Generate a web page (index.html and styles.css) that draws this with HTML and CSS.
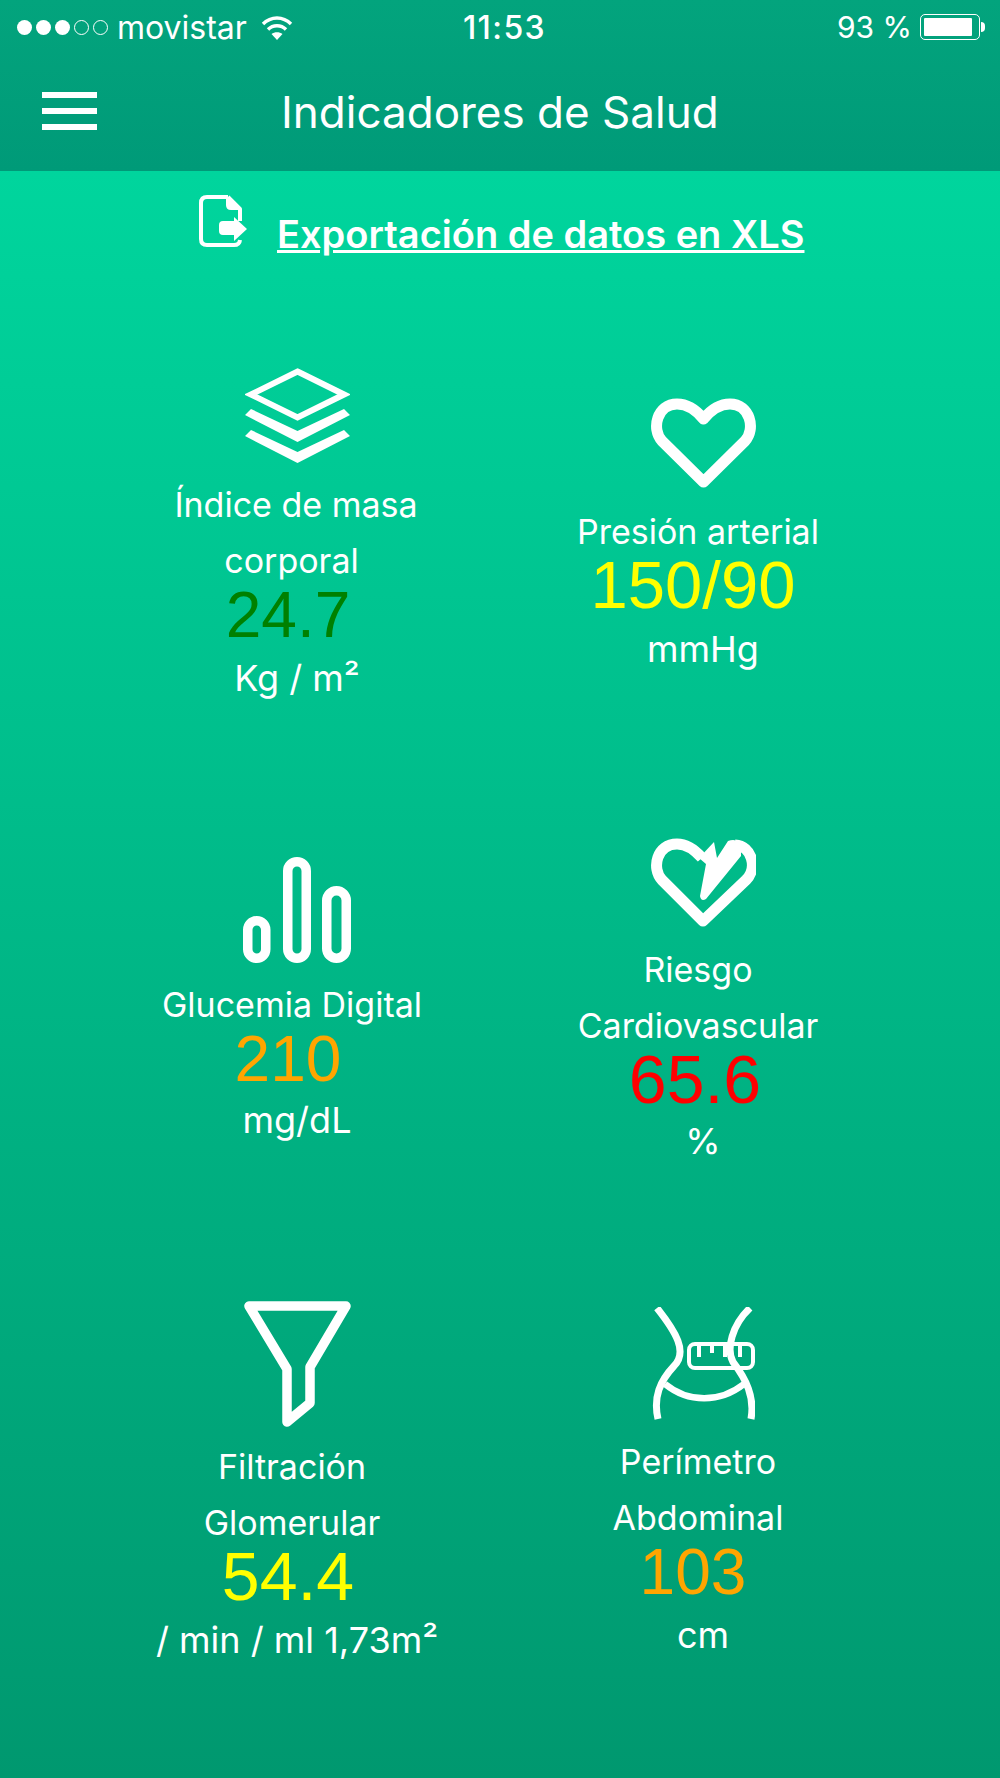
FILE: index.html
```html
<!DOCTYPE html>
<html lang="es">

<head>
    <meta charset="utf-8">
    <title>Indicadores de Salud</title>
    <link rel="stylesheet" href="styles.css">
</head>

<body>
    <header class="topbar">
        <div class="status">
            <div class="status-left">
                <span class="dot"></span><span class="dot"></span><span class="dot"></span><span class="dot empty"></span><span class="dot empty"></span>
                <span class="carrier">movistar</span>
                <svg class="wifi" viewBox="0 0 32 25" width="32" height="25">
                    <path d="M2 9C10 1 22 1 30 9" fill="none" stroke="#fff" stroke-width="3.4"/>
                    <path d="M7 14.500C12 9.500 20 9.500 25 14.500" fill="none" stroke="#fff" stroke-width="3.4"/>
                    <path d="M16 25L10.500 19C13.500 16.500 18.500 16.500 21.500 19Z" fill="#fff"/>
                </svg>
            </div>
            <div class="clock">11:53</div>
            <div class="status-right">
                <span class="percent">93 %</span>
                <span class="battery"><span class="battery-level"></span></span>
                <span class="battery-tip"></span>
            </div>
        </div>
        <div class="navbar">
            <div class="burger"><span></span><span></span><span></span></div>
            <h1 class="title">Indicadores de Salud</h1>
        </div>
    </header>

    <main class="content">
        <a class="export" href="#">
            <svg class="export-icon" viewBox="0 0 49 54" width="49" height="54">
                <path d="M30 3H9Q3 3 3 9V45Q3 51 9 51H36Q41.500 51 42 46M42 27V15L30 3" fill="none" stroke="#fff" stroke-width="4" stroke-linejoin="round"/>
                <path d="M28 3L43 16H33Q28 16 28 11Z" fill="#fff"/>
                <path d="M25 27H36V23L49 35L36 47V41H25Q21 41 21 37V31Q21 27 25 27Z" fill="#fff"/>
            </svg>
            <span class="export-text">Exportación de datos en XLS</span>
        </a>

        <div class="grid">
            <section class="card left">
                <svg class="icon" viewBox="0 0 105 95" width="105" height="95">
                    <path d="M52.500 3.500L99 26.500L52.500 49.500L6 26.500Z" fill="none" stroke="#fff" stroke-width="6"/>
                    <path d="M0 47L6 41L52.500 63L99 41L105 47L52.500 74Z" fill="#fff"/>
                    <path d="M0 68L6 62L52.500 84L99 62L105 68L52.500 95Z" fill="#fff"/>
                </svg>
                <div class="label label-imc">Índice de masa<br><span class="line-shift">corporal</span></div>
                <div class="value green">24.7</div>
                <div class="unit">Kg / m²</div>
            </section>

            <section class="card right first-right">
                <svg class="icon icon-heart" viewBox="0 0 105 90" width="105" height="90">
                    <path d="M52.500 84L11 43C0 31 6 6 26 6C38 6 46 13 52.500 21C59 13 67 6 79 6C99 6 105 31 94 43Z" fill="none" stroke="#fff" stroke-width="11" stroke-linejoin="round"/>
                </svg>
                <div class="label">Presión arterial</div>
                <div class="value big pressure yellow">150/90</div>
                <div class="unit">mmHg</div>
            </section>

            <section class="card left second-left">
                <svg class="icon" viewBox="0 0 108 106" width="108" height="106">
                    <g fill="none" stroke="#fff" stroke-width="9.500">
                        <rect x="4.750" y="63.750" width="18" height="37.500" rx="9"/>
                        <rect x="44.750" y="4.750" width="18.500" height="96.500" rx="9.250"/>
                        <rect x="83.750" y="33.750" width="19.500" height="67.500" rx="9.750"/>
                    </g>
                </svg>
                <div class="label">Glucemia Digital</div>
                <div class="value orange">210</div>
                <div class="unit unit-up">mg/dL</div>
            </section>

            <section class="card right">
                <svg class="icon" viewBox="0 0 105 90" width="105" height="90">
                    <path d="M51 20C44 12 36 6 26 6C6 6 0 30 11 42L52 83L95 42C107 30 101 8 84 7" fill="none" stroke="#fff" stroke-width="11" stroke-linejoin="round"/>
                    <path d="M48 20L63 4L66 20L77 3Q84 0 90 5L90 18L55 61Q50 64 49 58L55 26Z" fill="#fff"/>
                </svg>
                <div class="label">Riesgo<br>Cardiovascular</div>
                <div class="value big risk red">65.6</div>
                <div class="unit unit-up">%</div>
            </section>

            <section class="card left">
                <svg class="icon icon-funnel" viewBox="0 0 107 127" width="107" height="127">
                    <path d="M5 6H102L66 67V103L43 122V69Z" fill="none" stroke="#fff" stroke-width="9.500" stroke-linejoin="round"/>
                </svg>
                <div class="label">Filtración<br>Glomerular</div>
                <div class="value big yellow">54.4</div>
                <div class="unit">/ min / ml 1,73m²</div>
            </section>

            <section class="card right third-right">
                <svg class="icon" viewBox="0 0 103 113" width="103" height="113">
                    <g fill="none" stroke="#fff">
                        <path d="M5 1C24 25 36 45 22 59C8 74 1 90 6 112" stroke-width="7"/>
                        <path d="M98 1C80 18 74 42 81 55C94 72 103 90 99 112" stroke-width="7"/>
                        <path d="M13 77C36 96 68 96 92 77" stroke-width="6.500"/>
                        <rect x="37" y="37" width="64" height="24" rx="6" stroke-width="4"/>
                        <path d="M47 37V50M60 37V46M73 37V50M88 37V50" stroke-width="4"/>
                    </g>
                </svg>
                <div class="label">Perímetro<br>Abdominal</div>
                <div class="value orange">103</div>
                <div class="unit">cm</div>
            </section>
        </div>
    </main>
</body>

</html>
```

FILE: styles.css
```css
* {
    box-sizing: border-box;
}

body {
    margin: 0;
    height: 1778px;
    overflow: hidden;
    display: flex;
    flex-direction: column;
    color: #fff;
    font-family: Inter, "Liberation Sans", sans-serif;
}

/* top bar */
.topbar {
    height: 171px;
    background: linear-gradient(#03a47d, #009a78);
}

.status {
    height: 54px;
    padding: 0 15px 0 17px;
    display: grid;
    grid-template-columns: 1fr auto 1fr;
    align-items: center;
}

.status-left {
    display: flex;
    align-items: center;
    gap: 4px;
}

.dot {
    width: 15px;
    height: 15px;
    border-radius: 50%;
    background: #fff;
}

.dot.empty {
    background: transparent;
    border: 1.5px solid #fff;
}

.carrier {
    margin-left: 5px;
    font-size: 32px;
}

.wifi {
    margin-left: 10px;
}

.clock {
    margin-left: 7px;
    font-size: 32px;
    font-weight: 500;
    letter-spacing: 1.4px;
}

.status-right {
    display: flex;
    align-items: center;
    justify-content: flex-end;
}

.percent {
    font-size: 30px;
    margin-right: 8px;
}

.battery {
    width: 60px;
    height: 26px;
    padding: 3px;
    border: 1.5px solid #fff;
    border-radius: 5px;
}

.battery-level {
    display: block;
    height: 100%;
    width: 92%;
    background: #fff;
    border-radius: 1px;
}

.battery-tip {
    width: 4px;
    height: 10px;
    margin-left: 1px;
    background: #fff;
    border-radius: 0 4px 4px 0;
}

.navbar {
    height: 117px;
    padding: 0 0 2px 42px;
    display: flex;
    align-items: center;
}

.burger {
    width: 55px;
    margin-bottom: 1px;
    display: flex;
    flex-direction: column;
    gap: 10px;
}

.burger span {
    height: 6px;
    background: #fff;
}

.title {
    margin: 0 0 0 184px;
    font-size: 44px;
    font-weight: 400;
    white-space: nowrap;
}

/* main area */
.content {
    flex: 1;
    background: linear-gradient(#00d59d, #00986f);
}

.export {
    height: 100px;
    padding: 23px 0 0 198px;
    display: flex;
    align-items: flex-start;
    gap: 30px;
    color: #fff;
}

.export-text {
    margin-top: 17px;
    font-size: 38px;
    font-weight: 600;
}

.grid {
    margin-left: 94px;
    display: grid;
    grid-template-columns: 406px 406px;
    grid-template-rows: 470px 462px 400px;
    padding-top: 97px;
}

.card {
    display: flex;
    flex-direction: column;
    align-items: center;
}

.first-right {
    margin-top: 30px;
}

.second-left {
    margin-top: 19px;
}

.third-right {
    margin-top: 7px;
}

.icon {
    display: block;
    flex-shrink: 0;
    margin-bottom: 14px;
}

.icon-heart {
    margin-bottom: 16px;
}

.icon-funnel {
    margin-bottom: 12px;
}

.label {
    font-size: 34px;
    line-height: 56px;
    text-align: center;
    white-space: nowrap;
}

.value {
    height: 54px;
    font-family: "Liberation Sans", Arial, sans-serif;
    font-size: 64px;
    line-height: 53px;
    white-space: nowrap;
}

.value.big {
    font-size: 68px;
    line-height: 50px;
}

.value.pressure {
    font-size: 67px;
}

.unit {
    font-size: 36px;
    line-height: 71px;
    white-space: nowrap;
}

.unit-up {
    margin-top: -2px;
}

/* the lines do not share one centre in the app */
.left .label {
    margin-right: 10px;
}

.left .label-imc {
    margin-right: 2px;
}

.line-shift {
    padding-right: 9px;
}

.left .value {
    margin-right: 18px;
}

.right .label {
    margin-right: 10px;
}

.right .value {
    margin-right: 20px;
}

.right .value.risk {
    margin-right: 16px;
}

.green {
    color: #008000;
}

.yellow {
    color: #ffff00;
}

.orange {
    color: #ffa500;
}

.red {
    color: #ff0000;
}
```
